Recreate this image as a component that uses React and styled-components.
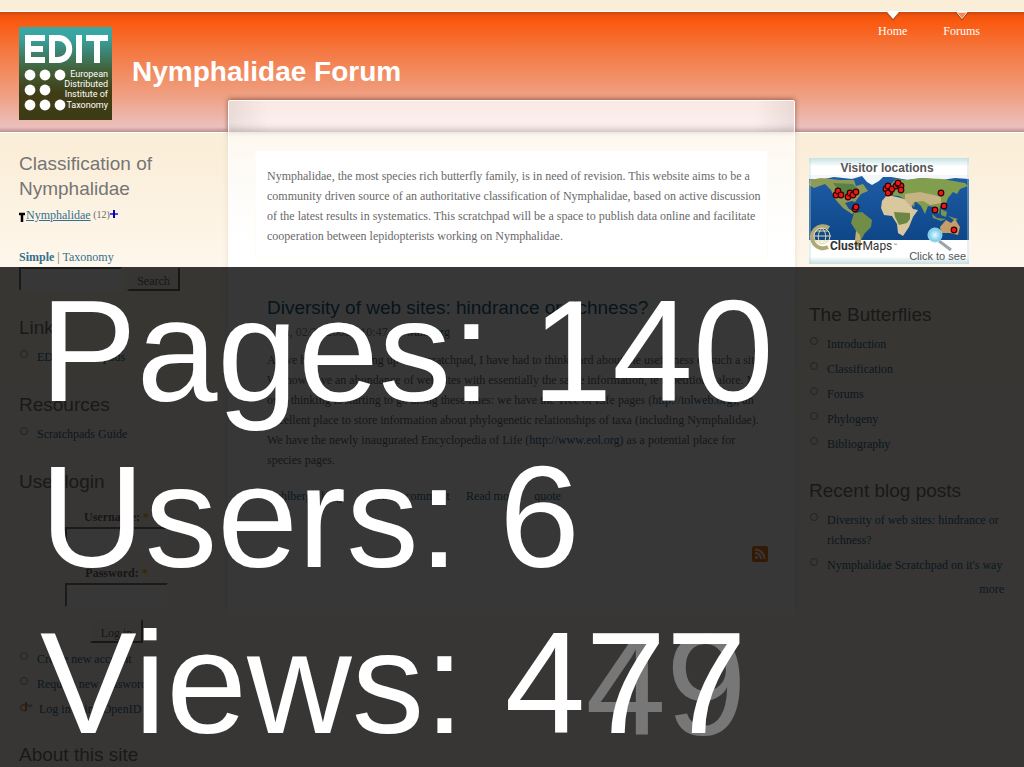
import React from 'react';
import styled, { createGlobalStyle } from 'styled-components';

const Global = createGlobalStyle`
  * { box-sizing: border-box; }
  body {
    margin: 0;
    background: #fffaf3;
    color: #696969;
    font: 12px/20px "Liberation Serif", "Times New Roman", serif;
  }
  button, input { font: inherit; }
`;

const Page = styled.div`
  height: 100vh;
  overflow: hidden;
  padding-top: 11px;
  background: linear-gradient(#fbeed9 0, #fbeed9 150px, #fef7ec 270px, #fffaf3 100%);
`;

const Header = styled.header`
  display: flex;
  align-items: flex-start;
  height: 122px;
  padding: 0 32px 0 19px;
  border-top: 1px solid #fff;
  border-bottom: 1px solid #fff;
  background: linear-gradient(#c8480f 0, #f2540f 4px, #fa5a10 10px, #f5743a 35px, #f28b60 60px, #efa287 86px, #ecb9b0 108px, #ebc0bd 115px, #b99090 120px);
`;

const Logo = styled.svg`
  flex: none;
  width: 93px;
  height: 93px;
  margin-top: 15px;
`;

const SiteName = styled.h1`
  margin: 44px 0 0 20px;
  color: #fff;
  font: bold 28px/32px "Liberation Sans", Arial, sans-serif;
  white-space: nowrap;
`;

const Nav = styled.nav`
  display: flex;
  gap: 12px;
  margin-left: auto;
`;

const NavLink = styled.a`
  display: flex;
  flex-direction: column;
  align-items: center;
  padding: 0 12px;
  color: #fff;
  text-decoration: none;
`;

const Pointer = styled.svg`
  width: 16px;
  height: 9px;
`;

const Columns = styled.div`
  display: grid;
  grid-template-columns: 228px minmax(0, 1fr) 229px;
  align-items: start;
`;

const Sidebar = styled.aside`
  padding: ${p => (p.$right ? '25px 20px 0 14px' : '18px 14px 0 19px')};
`;

const Block = styled.section`
  margin-top: ${p => p.$gap || 25}px;
  &:first-child { margin-top: 0; }
`;

const Heading = styled.h2`
  margin: 0;
  color: ${p => (p.$link ? '#1b6082' : '#757575')};
  font: 19px/25px "Liberation Sans", Arial, sans-serif;
`;

const Link = styled.a`
  color: #33708f;
  font-weight: ${p => (p.$bold ? 'bold' : 'normal')};
  text-decoration: ${p => (p.$underline ? 'underline' : 'none')};
`;

const TreeRow = styled.div`
  display: flex;
  align-items: center;
  margin-top: 4px;
  white-space: pre;
`;

const TreeIcon = styled.svg`
  width: ${p => p.$w}px;
  height: 14px;
`;

const Count = styled.small`
  font-size: 10px;
`;

const Modes = styled.div`
  margin-top: 22px;
`;

const SearchForm = styled.form`
  display: flex;
  gap: 5px;
`;

const Field = styled.input`
  width: 103px;
  height: 24px;
  padding: 1px 4px;
  border: 2px solid;
  border-color: #777 #fff #fff #777;
  background: #fff;
`;

const Button = styled.button`
  width: 53px;
  height: 24px;
  padding: 2px 0 0;
  border: 2px solid;
  border-color: #fff7ec #6f6c68 #6f6c68 #fff7ec;
  background: #fdf6ec;
  color: #696969;
`;

const LoginForm = styled.form`
  display: flex;
  flex-direction: column;
  align-items: center;
  margin-top: 13px;
`;

const Label = styled.label`
  margin-top: ${p => p.$gap || 0}px;
  font-weight: bold;
`;

const Star = styled.span`
  color: #ffae00;
`;

const Submit = styled(Button)`
  margin-top: 12px;
`;

const List = styled.ul`
  display: flex;
  flex-direction: column;
  gap: 5px;
  margin: ${p => p.$top || 7}px 0 0;
  padding: 0;
  list-style: none;
`;

const Item = styled.li`
  display: flex;
  gap: ${p => (p.$tight ? 6 : 9)}px;
  white-space: nowrap;
`;

const Bullet = styled.span`
  flex: none;
  width: 8px;
  height: 8px;
  margin: 3px 0 0 1px;
  border: 1px solid #98a4a8;
  border-radius: 50%;
`;

const OpenIdIcon = styled.svg`
  flex: none;
  width: 14px;
  height: 12px;
  margin-top: 2px;
`;

const More = styled.div`
  margin-top: 4px;
  text-align: right;
`;

const Main = styled.main`
  position: relative;
  margin-top: -33px;
`;

const PanelCap = styled.div`
  height: 33px;
  border: 1px solid #fff;
  border-radius: 2px 2px 0 0;
  background:
    linear-gradient(90deg, rgba(90,60,60,.1), transparent 40px, transparent calc(100% - 40px), rgba(90,60,60,.1)),
    linear-gradient(rgba(255,255,255,.76) 70%, rgba(240,232,232,.8));
  box-shadow: 0 -1px 5px rgba(80,30,10,.55);
`;

const Panel = styled.div`
  min-height: 482px;
  padding: 18px 26px 0;
  border-left: 1px solid #fff;
  border-right: 1px solid #fff;
  background: linear-gradient(rgba(255,255,255,.6), #fff 110px);
  box-shadow: 0 -4px 6px rgba(100,90,70,.14);
`;

const Mission = styled.div`
  padding: 15px 11px 11px;
  border: 1px solid #fffdf0;
  border-top: 0;
  background: #fff;
  white-space: nowrap;
`;

const Post = styled.article`
  margin-top: 37px;
  padding: 0 12px;
  white-space: nowrap;
`;

const Text = styled.p`
  margin: ${p => p.$top || 0}px 0 0;
`;

const Meta = styled.div`
  margin-top: 2px;
  color: #888;
`;

const PostLinks = styled.div`
  display: flex;
  gap: 16px;
  margin-top: 16px;
`;

const FeedLink = styled.a`
  display: flex;
  justify-content: flex-end;
  margin-top: 40px;
`;

const Overlay = styled.section`
  position: fixed;
  left: 0;
  right: 0;
  bottom: 0;
  padding: 1px 0 1px 40px;
  background: rgba(0,0,0,.784);
  color: #fff;
  font: 145px/166px "Liberation Sans", Arial, sans-serif;
  white-space: nowrap;
`;

const Stat = styled.div``;

const Digits = styled.span`
  position: relative;
`;

const Ghost = styled.span`
  position: absolute;
  top: 0;
  left: 0;
  color: #777;
  line-height: 166px;
`;

const Front = styled.span`
  position: relative;
`;

const MapImage = styled.svg`
  display: block;
  width: 160px;
  height: 106px;
`;

const logoDots = [[11, 48], [26, 48], [41, 48], [11, 63], [26, 63], [11, 78], [26, 78], [41, 78]];

function EditLogo() {
  return (
    <Logo viewBox="0 0 93 93" role="img" aria-label="EDIT">
      <defs>
        <linearGradient id="logoBg" x1="0" y1="0" x2="0" y2="1">
          <stop offset="0" stopColor="#3ba9a7" />
          <stop offset=".12" stopColor="#38a29e" />
          <stop offset=".45" stopColor="#42623b" />
          <stop offset=".7" stopColor="#413e17" />
          <stop offset="1" stopColor="#3d3b14" />
        </linearGradient>
      </defs>
      <rect width="93" height="93" fill="url(#logoBg)" />
      <g fill="none" stroke="#fff" strokeWidth="6">
        <path d="M26 11H9V33H26M9 22H24M60 8V36M67 11H89M78 11V36" />
        <path d="M33 11H39C54 11 54 33 39 33H33Z" />
      </g>
      {logoDots.map(([x, y]) => <circle key={`${x}-${y}`} cx={x} cy={y} r="5.4" fill="#fff" />)}
      <g fill="#fff" fontFamily="Roboto, sans-serif" fontSize="9" textAnchor="end">
        <text x="89" y="50">European</text>
        <text x="89" y="60">Distributed</text>
        <text x="89" y="70">Institute of</text>
        <text x="89" y="81">Taxonomy</text>
      </g>
    </Logo>
  );
}

const pins = [[27, 37], [29, 33], [32, 37], [39, 39], [41, 35], [44, 37], [47, 34], [46, 51], [47, 49], [77, 31], [79, 28], [81, 34], [79, 35], [83, 31], [87, 28], [89, 26], [92, 28], [92, 32], [89, 25], [132, 35], [126, 52], [135, 48], [145, 72]];

function ClusterMap() {
  return (
    <MapImage viewBox="0 0 160 106" role="img" aria-label="Visitor locations">
      <defs>
        <linearGradient id="frame" x1="0" y1="0" x2="0" y2="1">
          <stop offset="0" stopColor="#c6e2e6" />
          <stop offset=".08" stopColor="#fff" />
          <stop offset=".93" stopColor="#fff" />
          <stop offset="1" stopColor="#c6e0e2" />
        </linearGradient>
        <radialGradient id="lens"><stop offset="0" stopColor="#e9fbff" /><stop offset="1" stopColor="#68c4ea" /></radialGradient>
        <linearGradient id="sea" x1="0" y1="0" x2="0" y2="1"><stop offset="0" stopColor="#1f5da6" /><stop offset="1" stopColor="#0e4688" /></linearGradient>
      </defs>
      <rect width="160" height="106" fill="url(#frame)" />
      <rect y="17" width="160" height="65" fill="url(#sea)" />
      <path fill="#f3f7f8" d="M0 17H160V21L146 20L133 22L113 20L99 22L82 19L74 19L70 23L63 27L58 24L53 18L43 21L25 19L10 22L0 21Z" />
      <path fill="#8e9b57" d="M1 22L12 20L31 22L45 22L47 28L54 26L59 33L52 36L46 44L43 43L36 45L40 51L46 54L43 56L34 50L26 41L22 32L16 26L5 30L0 27Z" />
      <path fill="#568345" d="M24 25L44 26L49 31L43 39L31 34Z" />
      <path fill="#718d48" d="M45 55L53 54L63 62L62 69L56 75L52 82L49 89L47 84L47 73L42 65Z" />
      <path fill="#c7ae77" d="M47 73L51 77L52 85L48 89L46 82Z" />
      <path fill="#d9c79e" d="M73 43L78 37L88 39L99 42L104 51L109 52L104 59L100 69L94 78L89 75L88 66L83 58L75 57L72 50Z" />
      <path fill="#6c8743" d="M85 54L101 55L101 61L98 65L90 67L86 59Z" />
      <path fill="#819d4e" d="M75 36L76 29L82 26L87 21L96 22L112 20L133 21L156 25L159 28L151 31L148 36L144 34L139 40L136 48L131 48L130 56L125 49L119 48L116 56L112 48L106 43L105 49L97 42L90 38L79 37Z" />
      <path fill="#c5b383" d="M96 36L111 34L125 37L132 39L132 45L121 47L114 43L105 44L102 49L96 42Z" />
      <path fill="#799452" d="M123 56L128 60L137 61L132 63L124 60ZM132 51L138 54L137 59L132 57ZM139 58L149 61L146 63Z" />
      <path fill="#c59d68" d="M131 69L137 62L142 65L146 61L151 69L149 77L141 75L132 75Z" />
      <g fill="none" stroke="#b1a975" strokeWidth="4"><path d="M20 70A11 11 0 1 0 19 89" /></g>
      <g fill="none" stroke="#e2ddae"><circle cx="13" cy="78" r="8" /><path d="M5 78H22M13 70C8 75 8 83 13 86M13 70C18 75 18 83 13 86M7 73H19M7 83H19" /></g>
      {pins.map(([x, y]) => <circle key={`${x}-${y}`} cx={x} cy={y} r="2.8" fill="#ed1717" stroke="#300" strokeWidth="1.2" />)}
      <path d="M130 83L142 92" stroke="#9ba6aa" strokeWidth="3" />
      <circle cx="126" cy="77" r="7" fill="url(#lens)" stroke="#9adcf0" />
      <g fontFamily="'Liberation Sans', Arial, sans-serif" fill="#555">
        <text x="78" y="14" textAnchor="middle" fontSize="12" fontWeight="bold">Visitor locations</text>
        <text x="21" y="92" fontFamily="Roboto, sans-serif" fontSize="12" fill="#333"><tspan fontWeight="bold">Clustr</tspan>Maps</text>
        <text x="84" y="88" fontSize="4">™</text>
        <text x="157" y="102" textAnchor="end" fontSize="11">Click to see</text>
      </g>
      <path d="M1 0V106M159 0V106" stroke="#b8d7da" opacity=".7" />
    </MapImage>
  );
}

function FeedIcon() {
  return (
    <svg width="16" height="16" viewBox="0 0 16 16" aria-label="Syndicate content">
      <rect width="16" height="16" rx="2" fill="#ee7718" />
      <circle cx="4.5" cy="11.5" r="1.5" fill="#fff" />
      <path d="M3 7A6 6 0 0 1 9 13M3 3.5A9.5 9.5 0 0 1 12.5 13" fill="none" stroke="#fff" strokeWidth="2" />
    </svg>
  );
}

function LinkList({ items, top, children }) {
  return (
    <List $top={top}>
      {items.map(text => <Item key={text}><Bullet /><Link href="#">{text}</Link></Item>)}
      {children}
    </List>
  );
}

export default function App() {
  return (
    <Page>
      <Global />
      <Header>
        <EditLogo />
        <SiteName>Nymphalidae Forum</SiteName>
        <Nav>
          <NavLink href="#"><Pointer viewBox="0 0 16 9"><path d="M1 0H15L8 9Z" fill="#7f3513" opacity=".5" /><path d="M2 0H14L8 7Z" fill="#fff" /></Pointer>Home</NavLink>
          <NavLink href="#"><Pointer viewBox="0 0 16 9"><path d="M1 0H15L8 9Z" fill="#7f3513" opacity=".5" /><path d="M3 .5H13L8 6.5Z" fill="#f1895d" stroke="#f8d5c5" /></Pointer>Forums</NavLink>
        </Nav>
      </Header>
      <Columns>
        <Sidebar>
          <Block>
            <Heading>Classification of<br />Nymphalidae</Heading>
            <TreeRow>
              <TreeIcon $w={7} viewBox="0 0 7 14"><path d="M0 6H6M3 5V14" stroke="#000" strokeWidth="2.5" /></TreeIcon>
              <Link href="#" $underline>Nymphalidae</Link><Count> (12)</Count>
              <TreeIcon $w={8} viewBox="0 0 8 14"><path d="M0 6H8" stroke="#4a49ef" strokeWidth="2" /><path d="M4 2V10" stroke="#0a05a0" strokeWidth="2" /></TreeIcon>
            </TreeRow>
            <Modes><Link href="#" $bold>Simple</Link> | <Link href="#">Taxonomy</Link></Modes>
            <SearchForm onSubmit={e => e.preventDefault()}><Field aria-label="Search terms" /><Button>Search</Button></SearchForm>
          </Block>
          <Block $gap={24}><Heading>Links</Heading><LinkList items={['EDIT Scratchpads']} /></Block>
          <Block><Heading>Resources</Heading><LinkList items={['Scratchpads Guide']} /></Block>
          <Block>
            <Heading>User login</Heading>
            <LoginForm onSubmit={e => e.preventDefault()}>
              <Label htmlFor="user">Username: <Star>*</Star></Label>
              <Field id="user" />
              <Label htmlFor="pass" $gap={12}>Password: <Star>*</Star></Label>
              <Field id="pass" type="password" />
              <Submit>Log in</Submit>
            </LoginForm>
            <LinkList top={6} items={['Create new account', 'Request new password']}>
              <Item $tight>
                <OpenIdIcon viewBox="0 0 14 12"><path d="M7 4C1 3 0 8 3 9L7 10M8 4L12 5L13 3M12 6L9 5" fill="none" stroke="#aaa" strokeWidth="1.5" /><path d="M7 1V10" stroke="#f57900" strokeWidth="2" /></OpenIdIcon>
                <Link href="#">Log in using OpenID</Link>
              </Item>
            </LinkList>
          </Block>
          <Block $gap={23}><Heading>About this site</Heading></Block>
        </Sidebar>
        <Main>
          <PanelCap />
          <Panel>
            <Mission>
              Nymphalidae, the most species rich butterfly family, is in need of revision. This website aims to be a<br />
              community driven source of an authoritative classification of Nymphalidae, based on active discussion<br />
              of the latest results in systematics. This scratchpad will be a space to publish data online and facilitate<br />
              cooperation between lepidopterists working on Nymphalidae.
            </Mission>
            <Post>
              <Heading $link>Diversity of web sites: hindrance or richness?</Heading>
              <Meta>Mon, 02/25/2008 - 10:47 — <Link href="#">wahlberg</Link></Meta>
              <Text $top={8}>
                As we have been setting up this scratchpad, I have had to think hard about the usefulness of such a site.<br />
                We now have an abundance of web sites with essentially the same information, ie repetition galore. My<br />
                own thinking is starting to go along these lines: we have the Tree of Life pages (<Link href="#">http://tolweb.org</Link>), an<br />
                excellent place to store information about phylogenetic relationships of taxa (including Nymphalidae).<br />
                We have the newly inaugurated Encyclopedia of Life (<Link href="#">http://www.eol.org</Link>) as a potential place for<br />
                species pages.
              </Text>
              <PostLinks>
                <Link href="#">wahlberg's blog</Link><Link href="#">Add new comment</Link><Link href="#">Read more</Link><Link href="#">quote</Link>
              </PostLinks>
            </Post>
            <FeedLink href="#"><FeedIcon /></FeedLink>
          </Panel>
        </Main>
        <Sidebar $right>
          <Block><ClusterMap /></Block>
          <Block $gap={38}><Heading>The Butterflies</Heading><LinkList items={['Introduction', 'Classification', 'Forums', 'Phylogeny', 'Bibliography']} /></Block>
          <Block $gap={24}>
            <Heading>Recent blog posts</Heading>
            <List>
              <Item><Bullet /><Link href="#">Diversity of web sites: hindrance or<br />richness?</Link></Item>
              <Item><Bullet /><Link href="#">Nymphalidae Scratchpad on it's way</Link></Item>
            </List>
            <More><Link href="#">more</Link></More>
          </Block>
        </Sidebar>
      </Columns>
      <Overlay>
        <Stat>Pages: 140</Stat>
        <Stat>Users: 6</Stat>
        <Stat>Views: 4<Digits><Ghost aria-hidden="true">49</Ghost><Front>77</Front></Digits></Stat>
      </Overlay>
    </Page>
  );
}
